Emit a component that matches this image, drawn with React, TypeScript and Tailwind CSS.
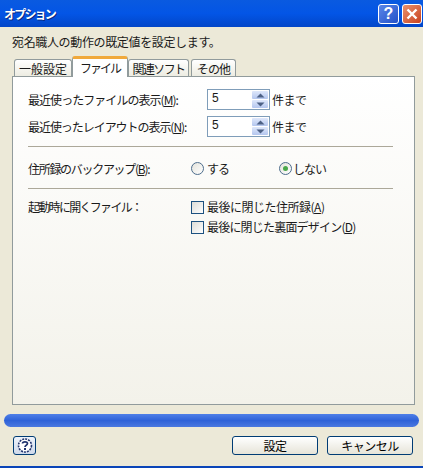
import type { ReactNode } from 'react';

const FONT = 'font-["Noto_Sans_CJK_JP","Noto_Sans_CJK_SC",sans-serif]';

function SpinBox() {
    return (
        <div className="w-[63px] h-[21px] border border-[#7f9db9] bg-white flex justify-between p-px">
            <span className="pl-[3px] leading-[14px] text-[12px] font-['Liberation_Sans',sans-serif]">5</span>
            <div className="w-[16px] flex flex-col gap-px">
                <SpinArrow up />
                <SpinArrow />
            </div>
        </div>
    );
}

function SpinArrow({ up = false }: { up?: boolean }) {
    return (
        <div className="flex-1 bg-gradient-to-b from-[#dfe8fb] to-[#b4c6ee] rounded-[1px] flex items-center justify-center">
            <svg width="9" height="5" viewBox="0 0 9 5">
                <path d={up ? 'M0.5 4.5 L4.5 0.5 L8.5 4.5 Z' : 'M0.5 0.5 L4.5 4.5 L8.5 0.5 Z'} fill="#4d6185" />
            </svg>
        </div>
    );
}

function Label({ text, mark, tail = ')' }: { text: string; mark: string; tail?: string }) {
    return (
        <span className="whitespace-nowrap">
            {text}(<span className="underline">{mark}</span>{tail}
        </span>
    );
}

function Tab({ children, active = false, className = '' }: { children: ReactNode; active?: boolean; className?: string }) {
    if (active) {
        return (
            <div className={`relative z-10 h-[21px] bg-white border-x border-[#919b9c] rounded-t-[3px] border-t-[3px] border-t-[#f0a93c] flex items-center justify-center whitespace-nowrap ${className}`}>
                {children}
            </div>
        );
    }
    return (
        <div className={`h-[18px] mt-[3px] bg-gradient-to-b from-white to-[#ecebe0] border-x border-t border-[#919b9c] rounded-t-[3px] flex items-center justify-center whitespace-nowrap ${className}`}>
            {children}
        </div>
    );
}

function Radio({ checked = false }: { checked?: boolean }) {
    return (
        <span className="w-[13px] h-[13px] rounded-full border border-[#4d6d8c] bg-gradient-to-br from-[#e4e3dc] to-white flex items-center justify-center shrink-0">
            {checked && <span className="w-[5px] h-[5px] rounded-full bg-[#4aa84a]" />}
        </span>
    );
}

function Check({ children }: { children: ReactNode }) {
    return (
        <div className="flex items-center gap-[3px] h-[20px]">
            <span className="w-[13px] h-[13px] border border-[#1c5180] bg-gradient-to-br from-[#dcdcd7] to-white shrink-0" />
            {children}
        </div>
    );
}

function Divider() {
    return <div className="h-px bg-[#aca899] mr-[21px]" />;
}

function PushButton({ children }: { children: ReactNode }) {
    return (
        <button className="w-[86px] h-[19px] border border-[#003c74] rounded-[3px] bg-gradient-to-b from-white to-[#e6e4d8] flex items-center justify-center text-[12px] text-black tracking-[-0.5px]">
            {children}
        </button>
    );
}

export default function App() {
    return (
        <div className={`w-[423px] h-[468px] bg-[#ece9d8] flex flex-col text-[12px] text-[#1a1a1a] overflow-hidden ${FONT}`}>
            {/* title bar */}
            <div className="h-[27px] shrink-0 bg-gradient-to-b from-[#0a5ae0] via-[#0355e6] to-[#0246c8] flex items-center justify-between pl-[4px] pr-px">
                <span className="text-white font-bold text-[12px] tracking-[-1.8px] [text-shadow:1px_1px_#0a2a80]">オプション</span>
                <div className="flex gap-[3px]">
                    <div className="w-[21px] h-[20px] rounded-[3px] border border-white bg-gradient-to-br from-[#5a86e8] to-[#2350c8] flex items-center justify-center text-white font-bold text-[16px] leading-none font-['Liberation_Sans',sans-serif]">
                        ?
                    </div>
                    <div className="w-[20px] h-[20px] rounded-[3px] border border-white bg-gradient-to-br from-[#e8906c] to-[#c8401c] flex items-center justify-center">
                        <svg width="12" height="12" viewBox="0 0 12 12">
                            <path d="M1.5 1.5 L10.5 10.5 M10.5 1.5 L1.5 10.5" stroke="white" strokeWidth="2.4" />
                        </svg>
                    </div>
                </div>
            </div>

            {/* body */}
            <div className="flex-1 flex flex-col pt-[6px]">
                <div className="pl-[12px] h-[18px] leading-[18px] tracking-[-0.35px]">宛名職人の動作の既定値を設定します。</div>

                <div className="flex pl-[14px] mt-[5px] h-[21px]">
                    <Tab className="w-[58px]">一般設定</Tab>
                    <Tab active className="w-[56px] tracking-[-2px]">ファイル</Tab>
                    <Tab className="w-[61px] tracking-[-1.6px]">関連ソフト</Tab>
                    <Tab className="w-[45px] ml-[2px] tracking-[-0.8px]">その他</Tab>
                </div>

                <div className="ml-[12px] w-[403px] h-[329px] -mt-px border border-[#919b9c] bg-gradient-to-b from-white to-[#f3f2ea] pl-[15px] pt-[12px]">
                    <div className="flex items-center h-[21px]">
                        <span className="w-[179px] tracking-[-0.95px]">
                            <Label text="最近使ったファイルの表示" mark="M" tail="):" />
                        </span>
                        <SpinBox />
                        <span className="ml-[2px] tracking-[-0.5px]">件まで</span>
                    </div>
                    <div className="flex items-center h-[21px] mt-[6px]">
                        <span className="w-[179px] tracking-[-1.05px]">
                            <Label text="最近使ったレイアウトの表示" mark="N" tail="):" />
                        </span>
                        <SpinBox />
                        <span className="ml-[2px] tracking-[-0.5px]">件まで</span>
                    </div>

                    <div className="mt-[9px]">
                        <Divider />
                    </div>

                    <div className="flex items-center h-[21px] mt-[11px]">
                        <span className="w-[163px] tracking-[-1.3px]">
                            <Label text="住所録のバックアップ" mark="B" tail="):" />
                        </span>
                        <div className="w-[88px] flex items-center gap-[3px] tracking-[-1px]">
                            <Radio />
                            <span>する</span>
                        </div>
                        <div className="flex items-center gap-[1px] tracking-[-1px]">
                            <Radio checked />
                            <span>しない</span>
                        </div>
                    </div>

                    <div className="mt-[9px]">
                        <Divider />
                    </div>

                    <div className="flex mt-[8px]">
                        <span className="w-[163px] h-[20px] leading-[20px] tracking-[-1.7px]">起動時に開くファイル：</span>
                        <div className="flex flex-col">
                            <Check><span className="tracking-[-0.5px]"><Label text="最後に閉じた住所録" mark="A" /></span></Check>
                            <Check><span className="tracking-[-0.8px]"><Label text="最後に閉じた裏面デザイン" mark="D" /></span></Check>
                        </div>
                    </div>
                </div>

                {/* progress bar */}
                <div className="mx-[4px] mt-[9px] h-[13px] rounded-full bg-gradient-to-b from-[#4f80e8] via-[#2f62d8] to-[#4a78e0]" />

                {/* footer */}
                <div className="flex items-center justify-between pl-[13px] pr-[10px] mt-[9px]">
                    <div className="w-[23px] h-[19px] border border-[#003c74] rounded-[3px] bg-gradient-to-b from-[#eef3fb] to-[#cfd9ea] flex items-center justify-center">
                        <svg width="16" height="15" viewBox="0 0 16 15">
                            <circle cx="8" cy="7.5" r="6.5" fill="white" stroke="#22346e" strokeWidth="1.6" strokeDasharray="2 1" />
                            <path d="M5.5 5.6 C5.5 3.2 10.5 3.2 10.5 5.6 C10.5 7.4 8 7.2 8 9" fill="none" stroke="#22346e" strokeWidth="1.7" />
                            <rect x="7" y="10" width="2" height="2" fill="#22346e" />
                        </svg>
                    </div>
                    <div className="flex gap-[9px]">
                        <PushButton>設定</PushButton>
                        <PushButton>キャンセル</PushButton>
                    </div>
                </div>
            </div>

            <div className="h-[2px] shrink-0 bg-[#0a45b8]" />
        </div>
    );
}
